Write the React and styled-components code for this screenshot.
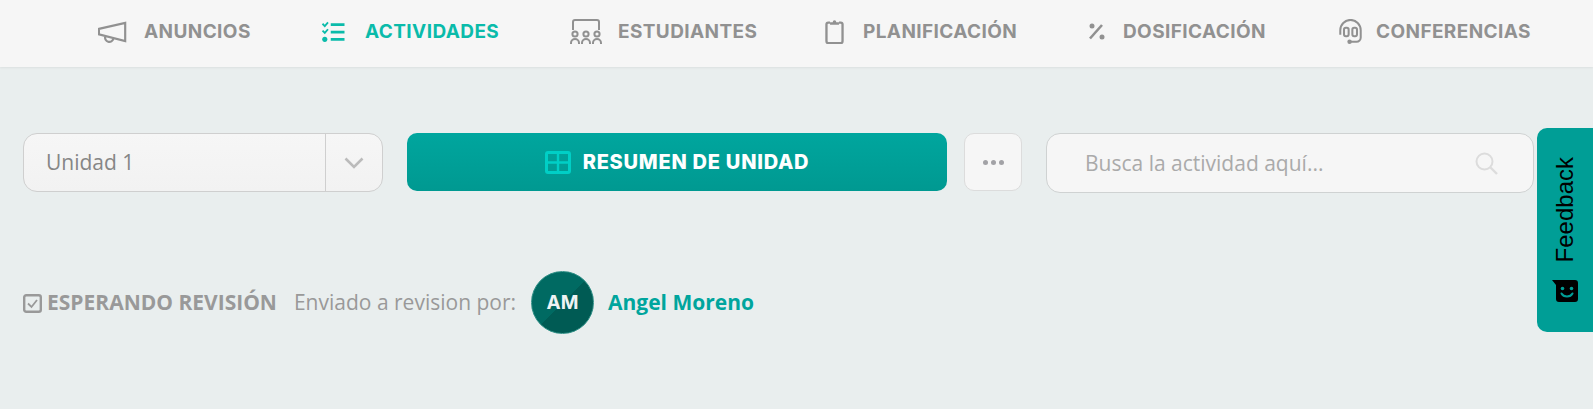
import React from 'react';
import styled, { createGlobalStyle } from 'styled-components';

const Global = createGlobalStyle`
  html, body { margin: 0; padding: 0; height: 100%; background: #e9eeee; overflow: hidden; }
  #root { height: 100%; }
  * { box-sizing: border-box; }
`;

const Page = styled.div`
  position: relative;
  height: 409px;
  width: 1593px;
  overflow: hidden;
  background: #e9eeee;
  font-family: "Open Sans", sans-serif;
`;
const Header = styled.header`
  height: 67px;
  background: #f6f6f6;
  box-shadow: 0 1px 2px rgba(0, 0, 0, 0.06);
  display: grid;
  grid-template-columns: 223px 249px 255px 264px 249px 1fr;
  padding: 0 0 4px 98px;
`;
const NavItem = styled.a`
  display: flex;
  align-items: center;
  color: ${p => (p.$active ? '#0abbaa' : '#919191')};
  font-family: Inter, "Liberation Sans", sans-serif;
  font-weight: 700;
  font-size: 19px;
  letter-spacing: 0.4px;
  white-space: nowrap;
`;
const NavIcon = styled.span`
  width: ${p => p.$slot}px;
  flex: none;
  display: flex;
  align-items: center;
  svg { display: block; }
`;
const Toolbar = styled.div`
  display: flex;
  align-items: flex-start;
  margin-top: 66px;
  padding-left: 23px;
`;
const Select = styled.div`
  width: 360px;
  height: 59px;
  display: flex;
  background: linear-gradient(#f6f6f6, #f2f2f2);
  border: 1px solid #cfcfcf;
  border-radius: 14px;
  color: #868686;
  font-size: 21px;
`;
const SelectValue = styled.div`
  flex: 1;
  display: flex;
  align-items: center;
  padding: 0 0 1px 22px;
`;
const SelectArrow = styled.div`
  width: 57px;
  border-left: 1px solid #cfcfcf;
  display: flex;
  align-items: center;
  justify-content: center;
`;
const PrimaryButton = styled.button`
  width: 540px;
  height: 58px;
  margin-left: 24px;
  border: 0;
  border-radius: 10px;
  background: linear-gradient(#00a69e, #009991);
  color: #fff;
  font-family: Inter, "Liberation Sans", sans-serif;
  font-weight: 800;
  font-size: 20px;
  letter-spacing: 0.75px;
  display: flex;
  align-items: center;
  justify-content: center;
  gap: 12px;
  padding: 0;
`;
const MoreButton = styled.button`
  width: 58px;
  height: 58px;
  margin-left: 17px;
  border: 1px solid #dcdcdc;
  border-radius: 10px;
  background: #f6f6f6;
  display: flex;
  align-items: center;
  justify-content: center;
  gap: 3px;
  padding: 0;
`;
const Dot = styled.i`
  width: 5px;
  height: 5px;
  border-radius: 50%;
  background: #a2a2a6;
`;
const Search = styled.div`
  width: 488px;
  height: 60px;
  margin-left: 24px;
  background: #f6f6f6;
  border: 1px solid #cfd2d2;
  border-radius: 14px;
  display: flex;
  align-items: center;
  justify-content: space-between;
  padding: 0 35px 0 38px;
  color: #aaaaaa;
  font-size: 21px;
`;
const StatusRow = styled.div`
  display: flex;
  align-items: center;
  margin-top: 78px;
  padding-left: 23px;
  height: 63px;
`;
const StatusLabel = styled.div`
  display: flex;
  align-items: center;
  gap: 5px;
  padding-bottom: 2px;
  color: #999;
  font-weight: 700;
  font-size: 21px;
  white-space: nowrap;
  svg { margin-top: 3px; }
`;
const SentBy = styled.span`
  margin-left: 17px;
  padding-bottom: 2px;
  color: #999;
  font-size: 21px;
  white-space: nowrap;
`;
const Avatar = styled.div`
  width: 63px;
  height: 63px;
  margin-left: 15px;
  border-radius: 50%;
  border: 1px solid #2f8f86;
  background: linear-gradient(135deg, #006a62 50%, #005b54 50%);
  color: #eef3f3;
  display: flex;
  align-items: center;
  justify-content: center;
  font-family: Inter, "Liberation Sans", sans-serif;
  font-weight: 700;
  font-size: 19px;
`;
const UserName = styled.span`
  margin-left: 14px;
  padding-bottom: 2px;
  color: #00a59d;
  font-weight: 700;
  font-size: 21px;
  white-space: nowrap;
`;
const Feedback = styled.div`
  position: absolute;
  right: 0;
  top: 128px;
  width: 56px;
  height: 204px;
  background: #009e96;
  border-radius: 10px 0 0 10px;
  display: flex;
  flex-direction: column;
  align-items: center;
  padding: 29px 0 30px 0;
  justify-content: space-between;
  color: #000;
  font-family: "Liberation Sans", sans-serif;
  font-size: 24px;
`;
const FeedbackText = styled.span`
  writing-mode: vertical-rl;
  transform: rotate(180deg);
  line-height: 1;
  white-space: nowrap;
`;

const stroke = { fill: 'none', stroke: 'currentColor', strokeWidth: 2 };

const Megaphone = () => (
  <svg width="29" height="22" viewBox="0 0 32 22" {...stroke}>
    <path d="M1 7.5 L30 1 V21 L1 13.5 Z M8 16 a4.5 4.5 0 0 0 9 2.5" strokeWidth="2.4" />
  </svg>
);
const Checklist = () => (
  <svg width="25" height="22" viewBox="0 0 26 24" fill="none" stroke="currentColor">
    <path d="M1 3 l2.5 2.5 L7 1.5 M1 10.5 l2.5 2.5 L7 9" strokeWidth="2" />
    <circle cx="3.5" cy="20" r="2.8" fill="currentColor" stroke="none" />
    <path d="M10 4h15M10 12h15M10 20h15" strokeWidth="3" />
  </svg>
);
const Classroom = () => (
  <svg width="32" height="25" viewBox="0 0 32 25" {...stroke}>
    <path d="M3 11V3 a2 2 0 0 1 2-2 H27 a2 2 0 0 1 2 2 V11" />
    <circle cx="5" cy="15" r="2.6" />
    <circle cx="16" cy="15" r="2.6" />
    <circle cx="27" cy="15" r="2.6" />
    <path d="M1 25v-1a4 4 0 0 1 8 0v1M12 25v-1a4 4 0 0 1 8 0v1M23 25v-1a4 4 0 0 1 8 0v1" />
  </svg>
);
const Clipboard = () => (
  <svg width="19" height="25" viewBox="0 0 20 28" fill="none" stroke="currentColor">
    <path d="M5 4 H3 a2 2 0 0 0-2 2 V25 a2 2 0 0 0 2 2 H17 a2 2 0 0 0 2-2 V6 a2 2 0 0 0-2-2 H15" strokeWidth="2.6" />
    <path d="M5 6.5 V3.5 H8 a2 2 0 0 1 4 0 H15 V6.5 Z" fill="currentColor" stroke="none" />
  </svg>
);
const Percent = () => (
  <svg width="16" height="17" viewBox="0 0 16 17" fill="currentColor">
    <circle cx="3" cy="3" r="2.5" />
    <circle cx="13" cy="14" r="2.5" />
    <path d="M1 15.5 L13 2" stroke="currentColor" strokeWidth="2.6" />
  </svg>
);
const Headset = () => (
  <svg width="25" height="26" viewBox="0 0 26 28" {...stroke}>
    <path d="M2 17 V12 a11 11 0 0 1 22 0 V20 a4.5 4.5 0 0 1-4.5 4.5 H13" strokeWidth="2.2" />
    <rect x="6" y="9.5" width="5" height="9" rx="2" strokeWidth="2.2" />
    <rect x="15" y="9.5" width="5" height="9" rx="2" strokeWidth="2.2" />
    <circle cx="12" cy="24.5" r="2.4" fill="currentColor" stroke="none" />
  </svg>
);
const Chevron = () => (
  <svg width="20" height="12" viewBox="0 0 20 12" fill="none" stroke="#bbb" strokeWidth="2.6">
    <path d="M1.5 1.5 L10 10 L18.5 1.5" />
  </svg>
);
const GridIcon = () => (
  <svg width="26" height="23" viewBox="0 0 26 23" fill="none" stroke="#00cfc6" strokeWidth="3">
    <rect x="1.5" y="1.5" width="23" height="20" rx="1.5" />
    <path d="M13 1v21M1 11.5h24" strokeWidth="2.4" />
  </svg>
);
const SearchIcon = () => (
  <svg width="23" height="23" viewBox="0 0 23 23" fill="none" stroke="#dcdcdc" strokeWidth="2">
    <circle cx="9.5" cy="9.5" r="8" />
    <path d="M15.5 15.5 L22 22" strokeWidth="2.4" />
  </svg>
);
const CheckBox = () => (
  <svg width="19" height="19" viewBox="0 0 19 19" fill="none" stroke="#999">
    <rect x="1.2" y="1.2" width="16.6" height="16.6" rx="2" strokeWidth="2.4" />
    <path d="M5 9.5 l3.5 3.5 L14 6" strokeWidth="1.8" />
  </svg>
);
const Smile = () => (
  <svg width="26" height="22" viewBox="0 0 26 22">
    <path d="M0 0 H23 a3 3 0 0 1 3 3 V19 a3 3 0 0 1-3 3 H7 a3 3 0 0 1-3-3 V5 Z" fill="#000" />
    <circle cx="10.5" cy="8.5" r="1.8" fill="#009e96" />
    <circle cx="19.5" cy="8.5" r="1.8" fill="#009e96" />
    <path d="M9.5 13.5 a6 5 0 0 0 11 0" fill="none" stroke="#009e96" strokeWidth="2" strokeLinecap="round" />
  </svg>
);

const nav = [
  { label: 'ANUNCIOS', icon: <Megaphone />, slot: 46 },
  { label: 'ACTIVIDADES', icon: <Checklist />, slot: 44, active: true },
  { label: 'ESTUDIANTES', icon: <Classroom />, slot: 48 },
  { label: 'PLANIFICACIÓN', icon: <Clipboard />, slot: 38 },
  { label: 'DOSIFICACIÓN', icon: <Percent />, slot: 34 },
  { label: 'CONFERENCIAS', icon: <Headset />, slot: 38 },
];

export default function App() {
  return (
    <Page>
      <Global />
      <Header>
        {nav.map(n => (
          <NavItem key={n.label} $active={n.active}>
            <NavIcon $slot={n.slot}>{n.icon}</NavIcon>
            {n.label}
          </NavItem>
        ))}
      </Header>
      <Toolbar>
        <Select>
          <SelectValue>Unidad 1</SelectValue>
          <SelectArrow><Chevron /></SelectArrow>
        </Select>
        <PrimaryButton><GridIcon />RESUMEN DE UNIDAD</PrimaryButton>
        <MoreButton><Dot /><Dot /><Dot /></MoreButton>
        <Search>
          <span>Busca la actividad aquí...</span>
          <SearchIcon />
        </Search>
      </Toolbar>
      <StatusRow>
        <StatusLabel><CheckBox />ESPERANDO REVISIÓN</StatusLabel>
        <SentBy>Enviado a revision por:</SentBy>
        <Avatar>AM</Avatar>
        <UserName>Angel Moreno</UserName>
      </StatusRow>
      <Feedback>
        <FeedbackText>Feedback</FeedbackText>
        <Smile />
      </Feedback>
    </Page>
  );
}
